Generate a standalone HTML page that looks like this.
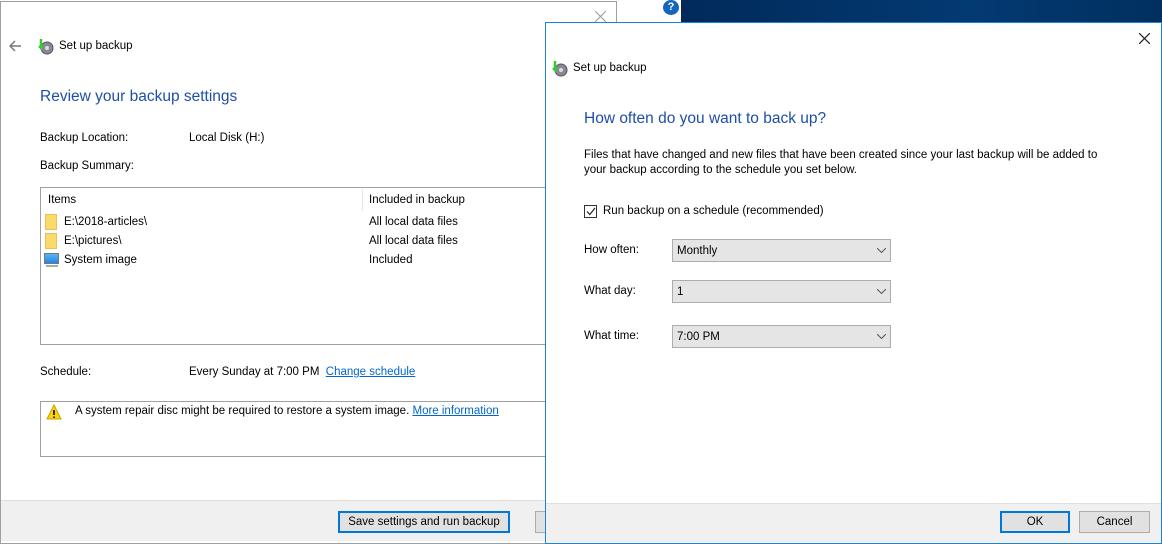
<!DOCTYPE html>
<html><head><meta charset="utf-8"><style>
*{margin:0;padding:0;box-sizing:border-box}
body{width:1162px;height:544px;overflow:hidden;background:#fff;font-family:"Liberation Sans",sans-serif;font-size:11.5px;color:#000;position:relative}
.abs{position:absolute;white-space:nowrap}
.link{color:#0066cc;text-decoration:underline}
.h{color:#1e4fa8;font-size:15.5px}
.btn{position:absolute;background:#e1e1e1;border:1px solid #adadad;text-align:center;line-height:21px;font-size:11.5px}
.btn.def{border:2px solid #0078d7;line-height:19px}
.sel{position:absolute;left:672px;width:219px;height:23px;background:#e5e5e5;border:1px solid #adadad;padding-left:4px;line-height:22px}
.sel svg{position:absolute;right:4px;top:8px}
</style></head><body>
<div class="abs" style="left:617px;top:0;width:64px;height:24px;background:#fff"></div>
<div class="abs" style="left:681px;top:0;width:481px;height:24px;background:linear-gradient(90deg,#012a5a,#023a72 60%,#01305f)"></div>
<div class="abs" style="left:663px;top:0;width:16px;height:15px;border-radius:50%;background:#1565c0;color:#fff;font-weight:bold;font-size:11px;text-align:center;line-height:15px">?</div>
<div class="abs" style="left:0;top:1px;width:617px;height:543px;border:1px solid #a0a0a0;background:#fff"></div>
<div class="abs" style="left:1px;top:500px;width:615px;height:41px;background:#f0f0f0;border-top:1px solid #dfdfdf"></div>
<svg class="abs" style="left:595px;top:11px" width="11" height="11"><path d="M0 0L11 11M11 0L0 11" stroke="#999" stroke-width="1"/></svg>
<svg class="abs" style="left:9px;top:40px" width="13" height="12"><path d="M12 6H1M6 1L1 6L6 11" stroke="#777" stroke-width="1.5" fill="none"/></svg>
<svg class="abs" style="left:37px;top:38px" width="17" height="17"><circle cx="10" cy="10" r="6" fill="#889" stroke="#555"/><circle cx="10" cy="10" r="2" fill="#ddd"/><path d="M4 1v9l-2-2M4 10l2-2" stroke="#3c3" stroke-width="2.5" fill="none"/></svg>
<div class="abs" style="left:59px;top:40px">Set up backup</div>
<div class="abs h" style="left:40px;top:88px">Review your backup settings</div>
<div class="abs" style="left:40px;top:132px">Backup Location:</div>
<div class="abs" style="left:189px;top:132px">Local Disk (H:)</div>
<div class="abs" style="left:40px;top:160px">Backup Summary:</div>
<div class="abs" style="left:40px;top:187px;width:520px;height:158px;border:1px solid #a0a0a0"></div>
<div class="abs" style="left:362px;top:189px;width:1px;height:22px;background:#e5e5e5"></div>
<div class="abs" style="left:48px;top:194px">Items</div>
<div class="abs" style="left:369px;top:194px">Included in backup</div>
<div class="abs" style="left:45px;top:214px;width:12px;height:16px;background:#fbd96b;border:1px solid #e6c35a"></div>
<div class="abs" style="left:64px;top:216px">E:\2018-articles\</div>
<div class="abs" style="left:369px;top:216px">All local data files</div>
<div class="abs" style="left:45px;top:233px;width:12px;height:16px;background:#fbd96b;border:1px solid #e6c35a"></div>
<div class="abs" style="left:64px;top:235px">E:\pictures\</div>
<div class="abs" style="left:369px;top:235px">All local data files</div>
<div class="abs" style="left:44px;top:253px;width:15px;height:11px;background:linear-gradient(#5ab4f5,#1e88e5);border:1px solid #777"></div>
<div class="abs" style="left:46px;top:265px;width:12px;height:2px;background:#aaa"></div>
<div class="abs" style="left:64px;top:254px">System image</div>
<div class="abs" style="left:369px;top:254px">Included</div>
<div class="abs" style="left:40px;top:366px">Schedule:</div>
<div class="abs" style="left:189px;top:366px">Every Sunday at 7:00 PM&nbsp; <span class="link">Change schedule</span></div>
<div class="abs" style="left:40px;top:401px;width:520px;height:56px;border:1px solid #a0a0a0"></div>
<svg class="abs" style="left:46px;top:404px" width="16" height="16"><path d="M8 1L15 15H1Z" fill="#ffd500" stroke="#c9a100"/><path d="M8 6v5M8 12.5v1.5" stroke="#000" stroke-width="1.6"/></svg>
<div class="abs" style="left:75px;top:405px">A system repair disc might be required to restore a system image. <span class="link">More information</span></div>
<div class="btn def" style="left:338px;top:511px;width:172px;height:22px">Save settings and run backup</div>
<div class="btn" style="left:535px;top:511px;width:20px;height:22px"></div>
<div class="abs" style="left:545px;top:22px;width:617px;height:522px;border:1px solid #1883d7;background:#fff"></div>
<div class="abs" style="left:546px;top:503px;width:615px;height:40px;background:#f0f0f0;border-top:1px solid #dfdfdf"></div>
<svg class="abs" style="left:1139px;top:33px" width="11" height="11"><path d="M0 0L11 11M11 0L0 11" stroke="#222" stroke-width="1.2"/></svg>
<svg class="abs" style="left:551px;top:60px" width="17" height="17"><circle cx="10" cy="10" r="6" fill="#889" stroke="#555"/><circle cx="10" cy="10" r="2" fill="#ddd"/><path d="M4 1v9l-2-2M4 10l2-2" stroke="#3c3" stroke-width="2.5" fill="none"/></svg>
<div class="abs" style="left:573px;top:62px">Set up backup</div>
<div class="abs h" style="left:584px;top:110px">How often do you want to back up?</div>
<div class="abs" style="left:584px;top:148px;line-height:15px">Files that have changed and new files that have been created since your last backup will be added to<br>your backup according to the schedule you set below.</div>
<div class="abs" style="left:584px;top:205px;width:13px;height:13px;border:1px solid #333;background:#fff"></div>
<svg class="abs" style="left:586px;top:207px" width="10" height="9"><path d="M1 4.5L3.8 7.5L9 1" stroke="#222" stroke-width="1.2" fill="none"/></svg>
<div class="abs" style="left:603px;top:205px">Run backup on a schedule (recommended)</div>
<div class="abs" style="left:584px;top:244px">How often:</div>
<div class="sel" style="top:239px">Monthly<svg width="9" height="5"><path d="M0 0L4.5 4.5L9 0" stroke="#555" fill="none"/></svg></div>
<div class="abs" style="left:584px;top:285px">What day:</div>
<div class="sel" style="top:280px">1<svg width="9" height="5"><path d="M0 0L4.5 4.5L9 0" stroke="#555" fill="none"/></svg></div>
<div class="abs" style="left:584px;top:330px">What time:</div>
<div class="sel" style="top:325px">7:00 PM<svg width="9" height="5"><path d="M0 0L4.5 4.5L9 0" stroke="#555" fill="none"/></svg></div>
<div class="btn def" style="left:1000px;top:511px;width:70px;height:22px">OK</div>
<div class="btn" style="left:1079px;top:511px;width:71px;height:22px">Cancel</div>
</body></html>
